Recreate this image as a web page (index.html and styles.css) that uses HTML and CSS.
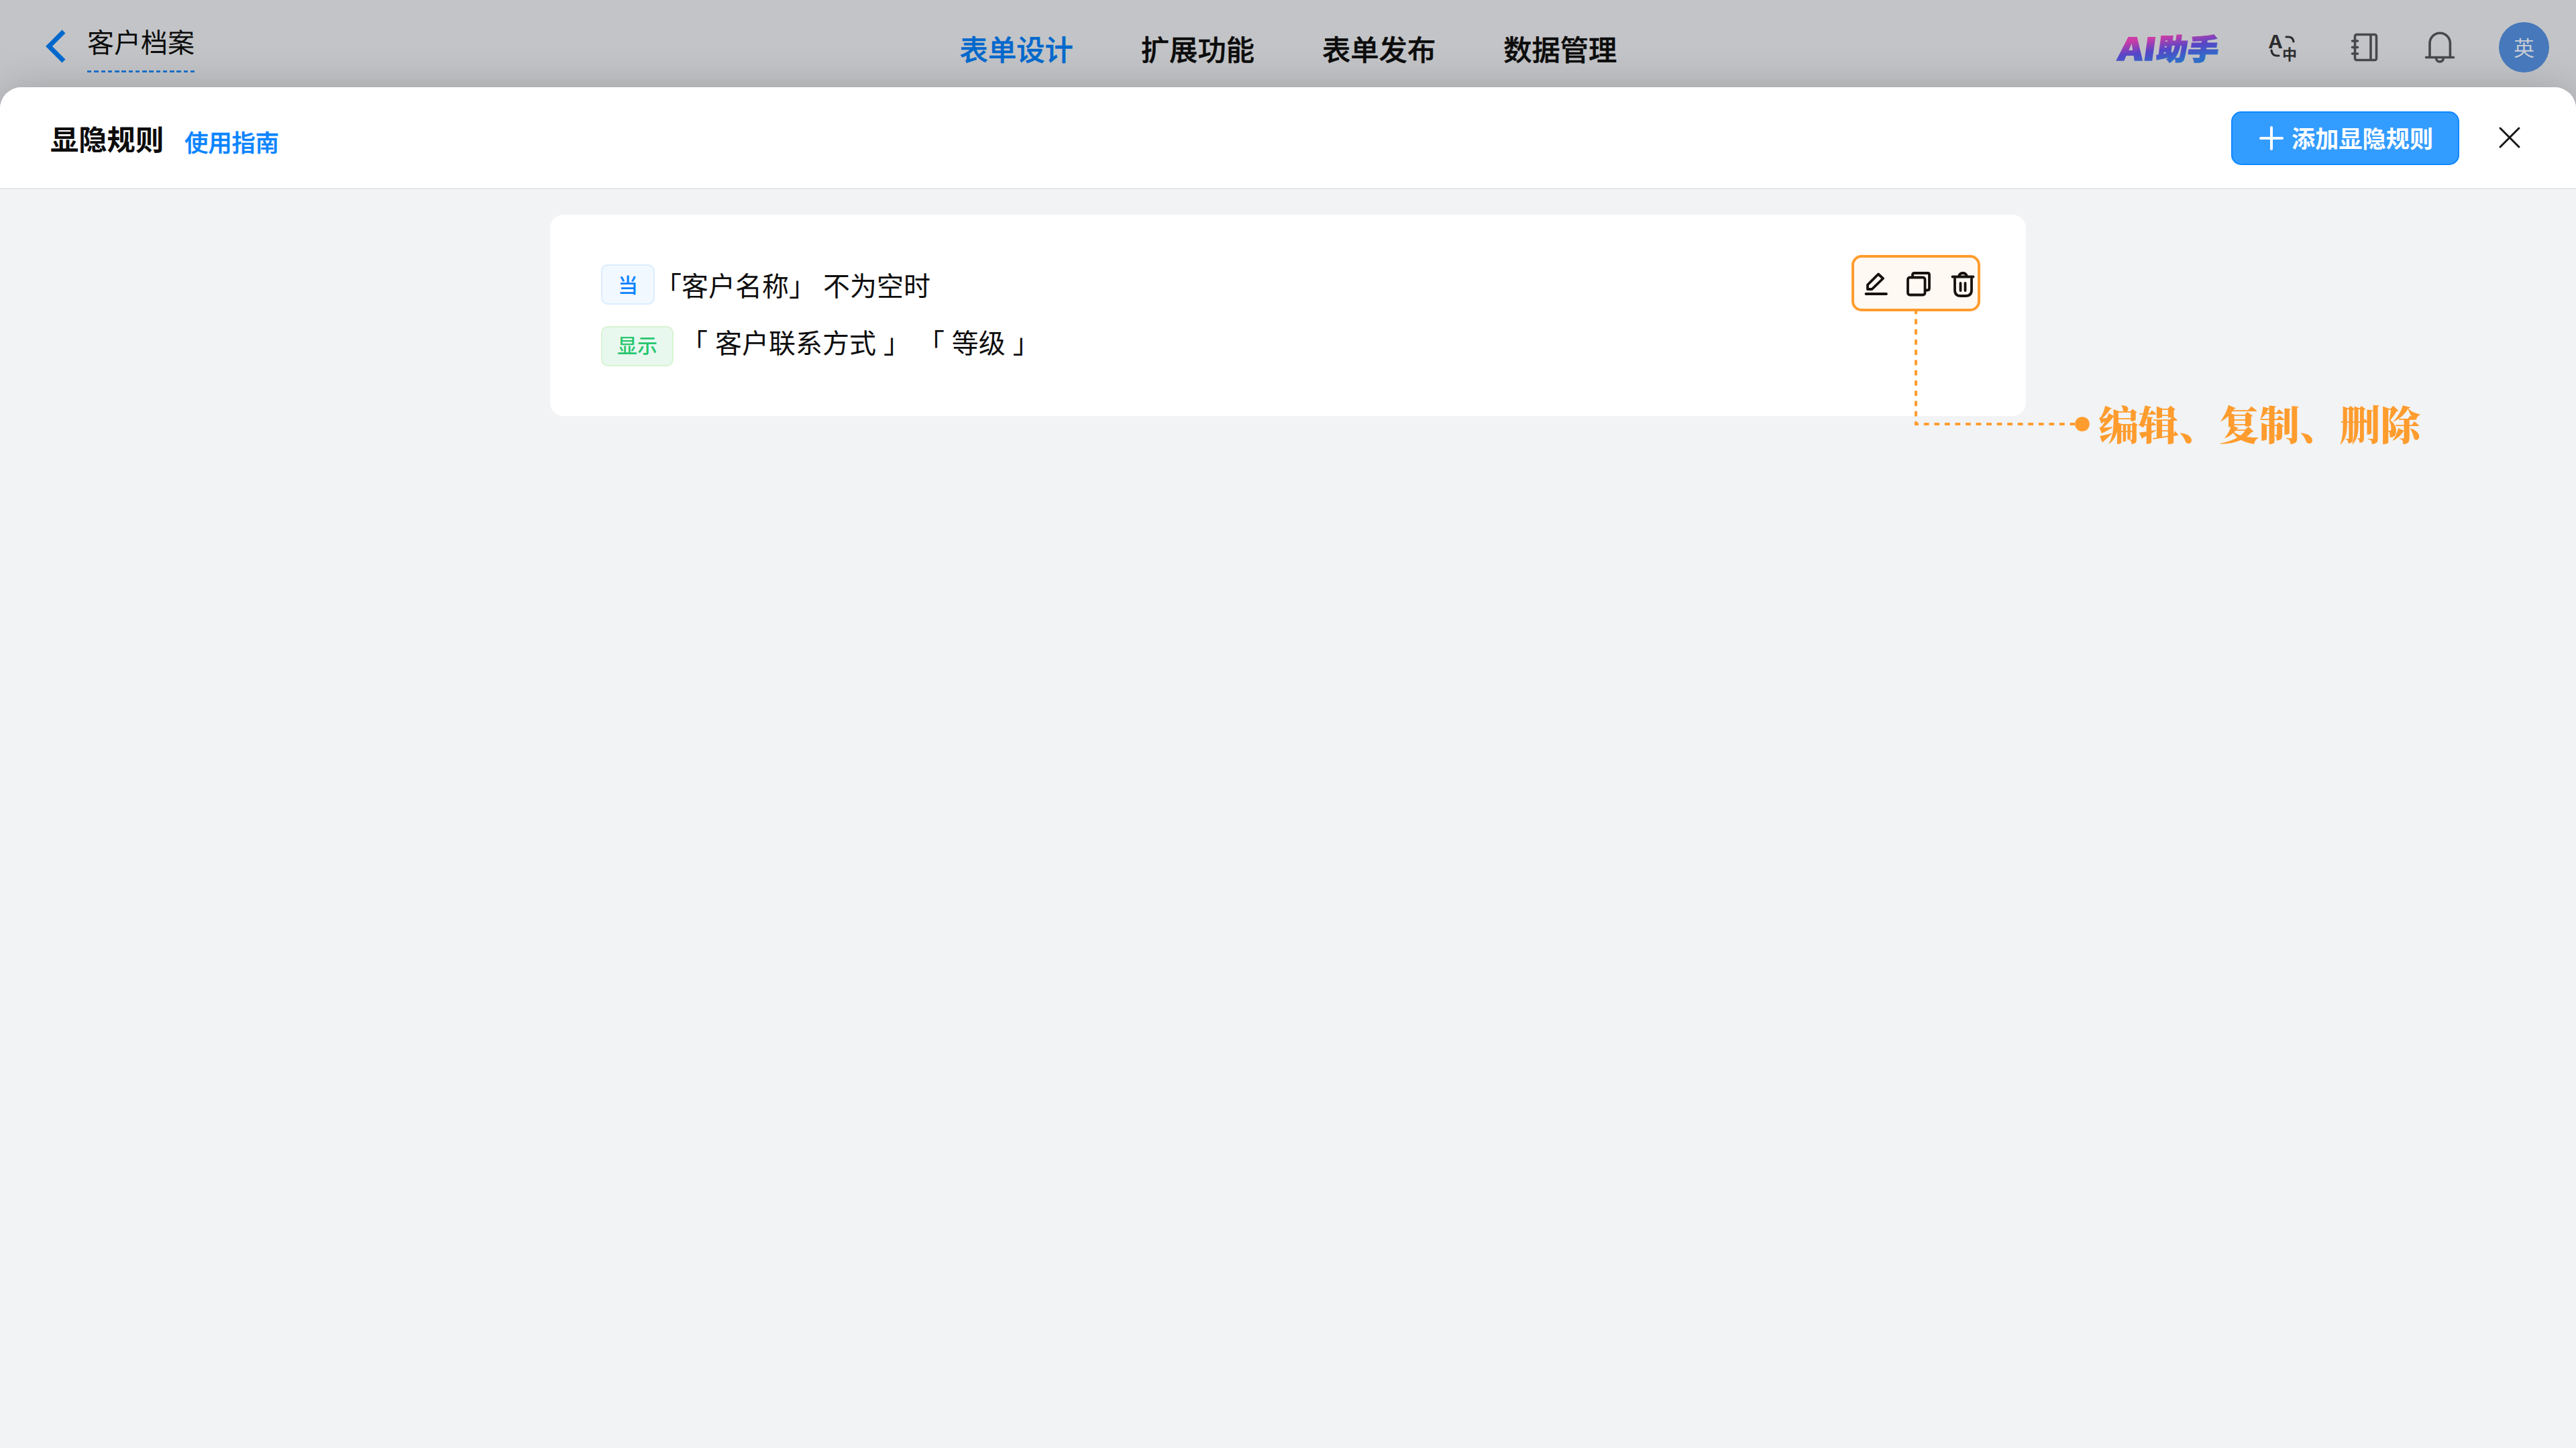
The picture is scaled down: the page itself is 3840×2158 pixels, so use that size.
FILE: index.html
```html
<!DOCTYPE html>
<html lang="zh-CN">
<head>
    <meta charset="UTF-8">
    <meta name="viewport" content="width=device-width, initial-scale=1.0">
    <title>显隐规则</title>
    <link rel="stylesheet" href="styles.css">
</head>
<body>

<header class="topbar">
    <div class="topbar-left">
        <svg class="back" width="30" height="50" viewBox="0 0 30 50">
            <path d="M27 3 L5 25 L27 47" fill="none" stroke="#0068cc" stroke-width="7"/>
        </svg>
        <div class="form-name">客户档案</div>
    </div>
    <nav class="tabs">
        <a class="tab active">表单设计</a>
        <a class="tab">扩展功能</a>
        <a class="tab">表单发布</a>
        <a class="tab">数据管理</a>
    </nav>
    <div class="topbar-right">
        <svg class="ai" width="156" height="60" viewBox="0 0 156 60">
            <defs>
                <linearGradient id="aiColor" gradientUnits="userSpaceOnUse" x1="70" y1="12" x2="76" y2="52">
                    <stop offset="0" stop-color="#cc3da6"/>
                    <stop offset="0.5" stop-color="#5546c8"/>
                    <stop offset="1" stop-color="#2f6dc8"/>
                </linearGradient>
            </defs>
            <g fill="url(#aiColor)" stroke="url(#aiColor)" stroke-width="1.500" transform="translate(7 0) skewX(-8)">
                <text x="0" y="49" font-size="46" textLength="56" lengthAdjust="spacingAndGlyphs">AI</text>
                <text x="57" y="48" font-size="43" textLength="92" lengthAdjust="spacingAndGlyphs">助手</text>
            </g>
        </svg>
        <svg class="translate" width="42" height="44" viewBox="0 0 42 44">
            <text x="0" y="22.500" font-size="27" textLength="20" lengthAdjust="spacingAndGlyphs">A</text>
            <text x="20" y="39.500" font-size="22">中</text>
            <path d="M26 6 h3 q7 0 8 7 M4 26 q1 8 8 8 h3" fill="none" stroke="#2b2c2e" stroke-width="3.200" stroke-linecap="round"/>
        </svg>
        <svg class="notebook" width="42" height="44" viewBox="0 0 42 44">
            <g fill="none" stroke="#47484b" stroke-width="3.600" stroke-linecap="round">
                <rect x="6.500" y="2.500" width="32" height="38" rx="2.500"/>
                <path d="M30 3 V40 M2.500 12 h8 M2.500 21.500 h8 M2.500 31 h8"/>
            </g>
        </svg>
        <svg class="bell" width="46" height="48" viewBox="0 0 46 48">
            <g fill="none" stroke="#47484b" stroke-width="3.600" stroke-linecap="round">
                <path d="M8 38 V17.500 a15.200 15.200 0 0 1 30.400 0 V38 M2.500 38.500 H43.500"/>
                <path d="M17.500 39.500 a5.500 5.500 0 0 0 11 0"/>
            </g>
        </svg>
        <div class="avatar">英</div>
    </div>
</header>

<main class="sheet">
    <div class="sheet-head">
        <h1 class="sheet-title">显隐规则</h1>
        <a class="guide">使用指南</a>
        <div class="add-button">
            <svg width="36" height="36" viewBox="0 0 36 36">
                <path d="M18 2 V34 M2 18 H34" stroke="#fff" stroke-width="4" stroke-linecap="round"/>
            </svg>
            <span>添加显隐规则</span>
        </div>
        <svg class="close" width="32" height="32" viewBox="0 0 32 32">
            <path d="M2 2 L30 30 M30 2 L2 30" stroke="#161616" stroke-width="3" stroke-linecap="round"/>
        </svg>
    </div>

    <div class="rule-card">
        <div class="rule">
            <div class="rule-row">
                <span class="tag tag-when">当</span>
                <span class="rule-text">「客户名称」 不为空时</span>
            </div>
            <div class="rule-row second">
                <span class="tag tag-show">显示</span>
                <span class="rule-text">「 客户联系方式 」 「 等级 」</span>
            </div>
        </div>
        <div class="actions">
            <svg width="36" height="40" viewBox="0 0 36 40">
                <g fill="none" stroke="#17110b" stroke-width="3.800" stroke-linecap="round" stroke-linejoin="round">
                    <path d="M6 20.500 L22 4.500 L29 11 L12.500 27 H6 Z M3.500 34 H34"/>
                </g>
            </svg>
            <svg width="36" height="40" viewBox="0 0 36 40">
                <g fill="none" stroke="#17110b" stroke-width="3.800" stroke-linejoin="round">
                    <rect x="1" y="9.500" width="25.500" height="26" rx="3"/>
                    <path d="M8 9 V5.500 q0 -2.500 2.500 -2.500 H30.500 q2.500 0 2.500 2.500 V25.500 q0 3 -3 3 H27"/>
                </g>
            </svg>
            <svg width="36" height="40" viewBox="0 0 36 40">
                <g fill="none" stroke="#17110b" stroke-width="3.800" stroke-linecap="round">
                    <path d="M2.500 8.500 H33.500 M12 7.500 q1.500 -4.500 6 -4.500 t6 4.500"/>
                    <path d="M6 11.500 V28.500 q0 8.500 8 8.500 H22 q9 0 9 -8.500 V11.500"/>
                    <path d="M14.500 18 V29 M21.500 18 V29"/>
                </g>
            </svg>

            <!-- callout from the action buttons -->
            <svg class="callout-line" width="264" height="184" viewBox="0 0 264 184">
                <g fill="none" stroke="#ff9c2e" stroke-width="4">
                    <path d="M4 0 V170" stroke-dasharray="7.700 7.550" stroke-dashoffset="3.700"/>
                    <path d="M2 168 H242" stroke-dasharray="7.700 7.850" stroke-dashoffset="1.700"/>
                </g>
                <circle cx="252" cy="168" r="10.800" fill="#ff9c2e"/>
            </svg>
            <div class="callout-text">编辑、复制、删除</div>
        </div>
    </div>
</main>

</body>
</html>
```
FILE: styles.css
```css
* {
    box-sizing: border-box;
}
body {
    margin: 0;
    height: 2158px;
    overflow: hidden;
    background-color: #c3c4c7;
    color: #0c0c0c;
    font-family: "Noto Sans CJK SC", sans-serif;
}
svg {
    display: block;
    flex: none;
    overflow: visible;
}
.topbar {
    height: 130px;
    display: grid;
    grid-template-columns: 1fr auto 1fr;
    align-items: start;
    padding: 0 40px 0 68px;
}
.topbar-left {
    display: flex;
    align-items: flex-start;
}
.back {
    margin-top: 44px;
}
.form-name {
    margin: 31px 0 0 32px;
    height: 77px;
    font-size: 40px;
    line-height: 60px;
    background: repeating-linear-gradient(90deg, #1a6fc4 0 6.500px, transparent 6.500px 10.250px) 0 100% / 100% 3px no-repeat;
}
.tabs {
    display: flex;
    gap: 101px;
    margin-right: 27px;
}
.tab {
    font-size: 42.300px;
    font-weight: 500;
    line-height: 143px;
    height: 130px;
    -webkit-text-stroke: 0.5px;
}
.tab.active {
    color: #0068cc;
}
.topbar-right {
    display: flex;
    justify-content: flex-end;
    align-items: center;
    height: 141px;
}
.ai {
    font-weight: 900;
    margin-right: 70px;
}
.translate {
    fill: #2b2c2e;
    font-weight: 700;
    margin-right: 80px;
}
.notebook {
    margin-right: 68px;
}
.bell {
    margin-right: 65px;
}
.avatar {
    width: 75px;
    height: 75px;
    border-radius: 50%;
    background-color: #4678bb;
    color: #c6cbd3;
    font-size: 31px;
    line-height: 73px;
    text-align: center;
}
.sheet {
    height: 2028px;
    background-color: #f1f3f5;
    border-radius: 32px 32px 0 0;
    box-shadow: 0 0 60px rgba(0, 0, 0, 0.18);
}
.sheet-head {
    height: 152px;
    display: flex;
    align-items: flex-start;
    padding: 36px 83px 0 75px;
    background-color: #fff;
    border-bottom: 2px solid #e6e7e8;
    border-radius: 32px 32px 0 0;
}
.sheet-title {
    margin: 0;
    font-size: 42.300px;
    font-weight: 700;
    line-height: 80px;
}
.guide {
    margin-left: 31px;
    color: #0a84ff;
    font-size: 35.200px;
    font-weight: 500;
    line-height: 90px;
    -webkit-text-stroke: 0.5px;
}
.add-button {
    width: 340px;
    height: 80px;
    margin-left: auto;
    display: flex;
    align-items: center;
    gap: 12px;
    padding-left: 40px;
    background-color: #339cff;
    border: 2px solid #0d88ff;
    border-radius: 15px;
    color: #fff;
    font-size: 35.200px;
    font-weight: 700;
    line-height: 76px;
}
.add-button span {
    height: 78px;
}
.close {
    margin: 23px 0 0 59px;
}
.rule-card {
    width: 2200px;
    height: 300px;
    margin: 38px auto 0;
    display: flex;
    justify-content: space-between;
    padding: 60px 68px 0 76px;
    background-color: #fff;
    border-radius: 20px;
}
.rule {
    padding-top: 14px;
}
.rule-row {
    display: flex;
    align-items: center;
    height: 60px;
}
.rule-row.second {
    margin-top: 32px;
}
.tag {
    height: 60px;
    border-radius: 10px;
    font-size: 30px;
    font-weight: 500;
    line-height: 54px;
    text-align: center;
}
.tag-when {
    width: 80px;
    color: #0a84ff;
    background-color: #f2f8ff;
    border: 2px solid #d9ecff;
}
.tag-show {
    width: 108px;
    color: #28c76f;
    background-color: #e8f8ef;
    border: 2px solid #d8f3d2;
    line-height: 51px;
}
.rule-text {
    font-size: 40px;
    line-height: 60px;
    white-space: nowrap;
    word-spacing: 2px;
    text-spacing-trim: space-all;
}
.tag-show + .rule-text {
    margin: -15px 0 0 11px;
}
.actions {
    position: relative;
    width: 192px;
    height: 84px;
    display: flex;
    align-items: center;
    justify-content: space-between;
    padding: 4px 4px 0 14px;
    background-color: #fff9f3;
    border: 4px solid #ff9c2e;
    border-radius: 15px;
}
.callout-line {
    position: absolute;
    left: 88px;
    top: 80px;
}
.callout-text {
    position: absolute;
    left: 364px;
    top: 206px;
    color: #ff9c2e;
    font-family: "Noto Serif CJK SC", "Noto Sans CJK SC", serif;
    font-size: 60px;
    font-weight: 900;
    line-height: 80px;
    white-space: nowrap;
}
```
